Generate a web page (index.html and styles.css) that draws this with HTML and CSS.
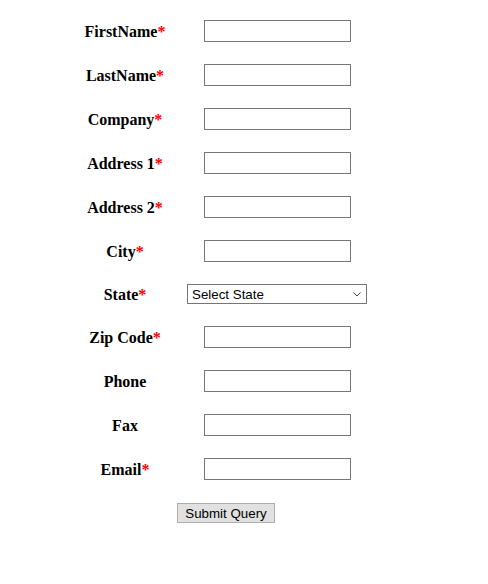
FILE: index.html
```html
<!DOCTYPE html>
<html lang="en">
<head>
  <meta charset="UTF-8">
  <title>Address Form</title>
  <link rel="stylesheet" href="styles.css">
</head>
<body>
  <form class="form">
    <label class="label">FirstName<span class="req">*</span></label>
    <input class="field" type="text">

    <label class="label">LastName<span class="req">*</span></label>
    <input class="field" type="text">

    <label class="label">Company<span class="req">*</span></label>
    <input class="field" type="text">

    <label class="label">Address 1<span class="req">*</span></label>
    <input class="field" type="text">

    <label class="label">Address 2<span class="req">*</span></label>
    <input class="field" type="text">

    <label class="label">City<span class="req">*</span></label>
    <input class="field" type="text">

    <label class="label">State<span class="req">*</span></label>
    <div class="select-wrap">
      <select class="select">
        <option>Select State</option>
      </select>
      <svg class="chevron" width="8" height="5" viewBox="0 0 8 5">
        <path d="M0.5 0.5 L4 4 L7.5 0.5" fill="none" stroke="#444" stroke-width="1"/>
      </svg>
    </div>

    <label class="label">Zip Code<span class="req">*</span></label>
    <input class="field" type="text">

    <label class="label">Phone</label>
    <input class="field" type="text">

    <label class="label">Fax</label>
    <input class="field" type="text">

    <label class="label">Email<span class="req">*</span></label>
    <input class="field" type="text">

    <div class="actions">
      <button class="submit" type="submit">Submit Query</button>
    </div>
  </form>
</body>
</html>
```

FILE: styles.css
```css
body {
  margin: 8px;
  background: #fff;
  font-family: 'Liberation Serif', 'Times New Roman', serif;
}

.form {
  display: grid;
  grid-template-columns: 103px 203px;
  align-items: center;
  justify-items: center;
  row-gap: 22px;
  margin: 1px 0 0 65px;
  padding-top: 11px;
}

.label {
  padding: 2px 0 0 1px;
  font-size: 16px;
  font-weight: bold;
  color: #000;
}

.req {
  color: #f00;
}

.field {
  box-sizing: border-box;
  width: 147px;
  height: 22px;
  margin: 0;
  border: 1px solid #767676;
  padding: 1px 2px;
  font-size: 13px;
}

.select-wrap {
  position: relative;
  display: flex;
  margin-right: 1px;
}

.select {
  box-sizing: border-box;
  width: 180px;
  height: 20px;
  margin: 0;
  border: 1px solid #767676;
  border-radius: 0;
  padding: 0 0 0 4px;
  background: #fff;
  appearance: none;
  -webkit-appearance: none;
  font-family: 'Liberation Sans', Arial, sans-serif;
  font-size: 13.33px;
  color: #000;
}

.chevron {
  position: absolute;
  right: 6px;
  top: 8px;
  pointer-events: none;
}

.actions {
  grid-column: 1 / span 2;
  display: flex;
  margin-top: 1px;
}

.submit {
  box-sizing: border-box;
  width: 98px;
  height: 20px;
  margin: 0;
  padding: 0;
  border: 1px solid #adadad;
  border-radius: 0;
  background: #e1e1e1;
  font-family: 'Liberation Sans', Arial, sans-serif;
  font-size: 13.33px;
  color: #000;
}
```
